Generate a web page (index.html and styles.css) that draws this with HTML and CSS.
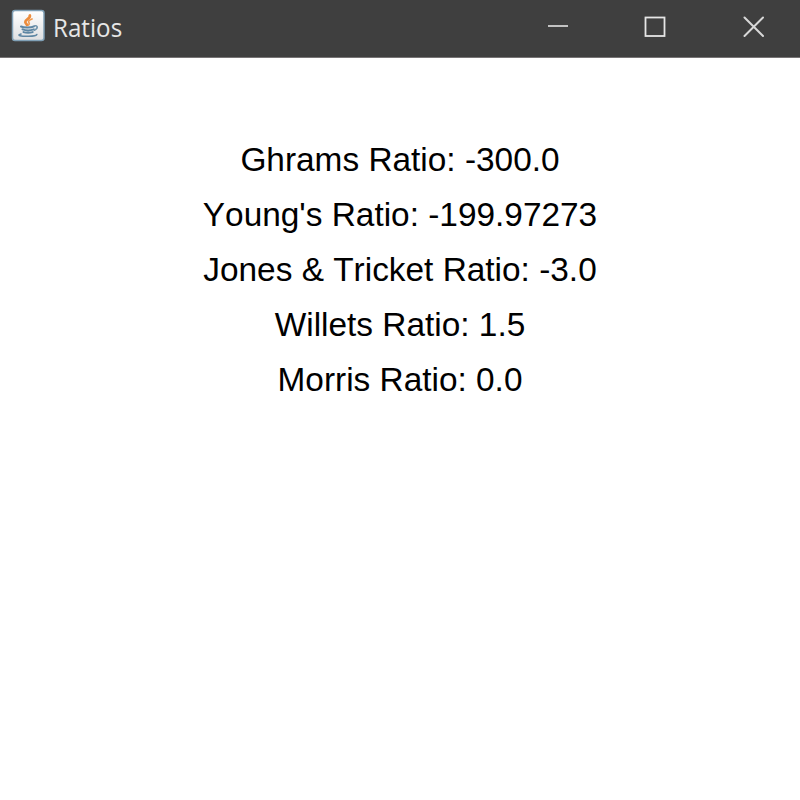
FILE: index.html
```html
<!DOCTYPE html>
<html lang="en">
<head>
<meta charset="utf-8">
<title>Ratios</title>
<link rel="stylesheet" href="styles.css">
</head>
<body>
<div class="window">
  <header class="titlebar">
    <svg class="app-icon" viewBox="0 0 36 34" aria-hidden="true">
      <defs><linearGradient id="tile" x1="0" y1="0" x2="0" y2="1"><stop offset="0" stop-color="#ffffff"/><stop offset="1" stop-color="#dedfe1"/></linearGradient></defs>
      <rect x="2.500" y="1.500" width="31.500" height="30" rx="2.500" fill="url(#tile)" stroke="#80a0b6" stroke-width="1.500"/>
      <g fill="none" stroke-linecap="round">
        <path d="M19.800 6.500c1 3.200-4.800 3.700-4.500 6.500 .1 1.500 1.500 2 1.700 3" stroke="#ec8c3c" stroke-width="2.800"/>
        <path d="M22 10c-3 1.200-4.200 2.200-3 3.700.7 1 .4 1.500-.4 2.300" stroke="#ef9a50" stroke-width="1.700"/>
        <path d="M11 17.500c2.800 1.400 10 1.400 13-.1M12.500 20.400c3 1.100 8 1.100 11.300 0M13.500 23.100c2.600.9 6.400.9 9.200 0" stroke="#5e86a3" stroke-width="2"/>
        <path d="M24.500 17c3-1.300 4.200 2.500-.1 4.200" stroke="#6f93ac" stroke-width="1.600"/>
        <path d="M11 25c-5 1.300 0 2.400 7.500 2.200 5 0 8-.7 8.300-1.700" stroke="#5e86a3" stroke-width="1.600"/>
      </g>
    </svg>
    <h1 class="title">Ratios</h1>
    <div class="controls">
      <svg class="control" viewBox="0 0 98 57" aria-label="Minimize"><path class="minimize" d="M42 26H62"/></svg>
      <svg class="control" viewBox="0 0 98 57" aria-label="Maximize"><rect class="maximize" x="41.500" y="17.500" width="19" height="18.500"/></svg>
      <svg class="control" viewBox="0 0 98 57" aria-label="Close"><path class="close" d="M42.500 17.500L61 36M61 17.500L42.500 36"/></svg>
    </div>
  </header>
  <main class="ratios">
    <p>Ghrams Ratio: -300.0</p>
    <p>Young's Ratio: -199.97273</p>
    <p>Jones &amp; Tricket Ratio: -3.0</p>
    <p>Willets Ratio: 1.5</p>
    <p>Morris Ratio: 0.0</p>
  </main>
</div>
</body>
</html>
```
FILE: styles.css
```css
* { box-sizing: border-box; }
body { margin: 0; background: #fff; }
.window { height: 100vh; overflow: hidden; }
.titlebar {
  display: flex;
  height: 58px;
  padding-left: 10px;
  background: #3f3f3f;
  border-bottom: 1px solid #777475;
}
.app-icon { width: 36px; height: 34px; margin-top: 9px; }
.title {
  margin: 0 0 0 7px;
  font: 400 26px/54px "Open Sans", "Noto Sans", sans-serif;
  color: #e6e6e6;
  transform: scaleX(.93);
  transform-origin: left;
}
.controls { display: flex; margin-left: auto; }
.control { width: 98px; height: 57px; fill: none; stroke: #d8d8d8; }
.minimize { stroke: #c2c2c2; stroke-width: 2; }
.maximize { stroke: #e6e6e6; stroke-width: 1.8; }
.close { stroke-width: 2; stroke-linecap: round; }
.ratios {
  padding-top: 74px;
  font: 33.4px/55px "Liberation Sans", Arial, sans-serif;
  font-kerning: none;
  text-align: center;
  color: #000;
}
.ratios p { margin: 0; }
```
